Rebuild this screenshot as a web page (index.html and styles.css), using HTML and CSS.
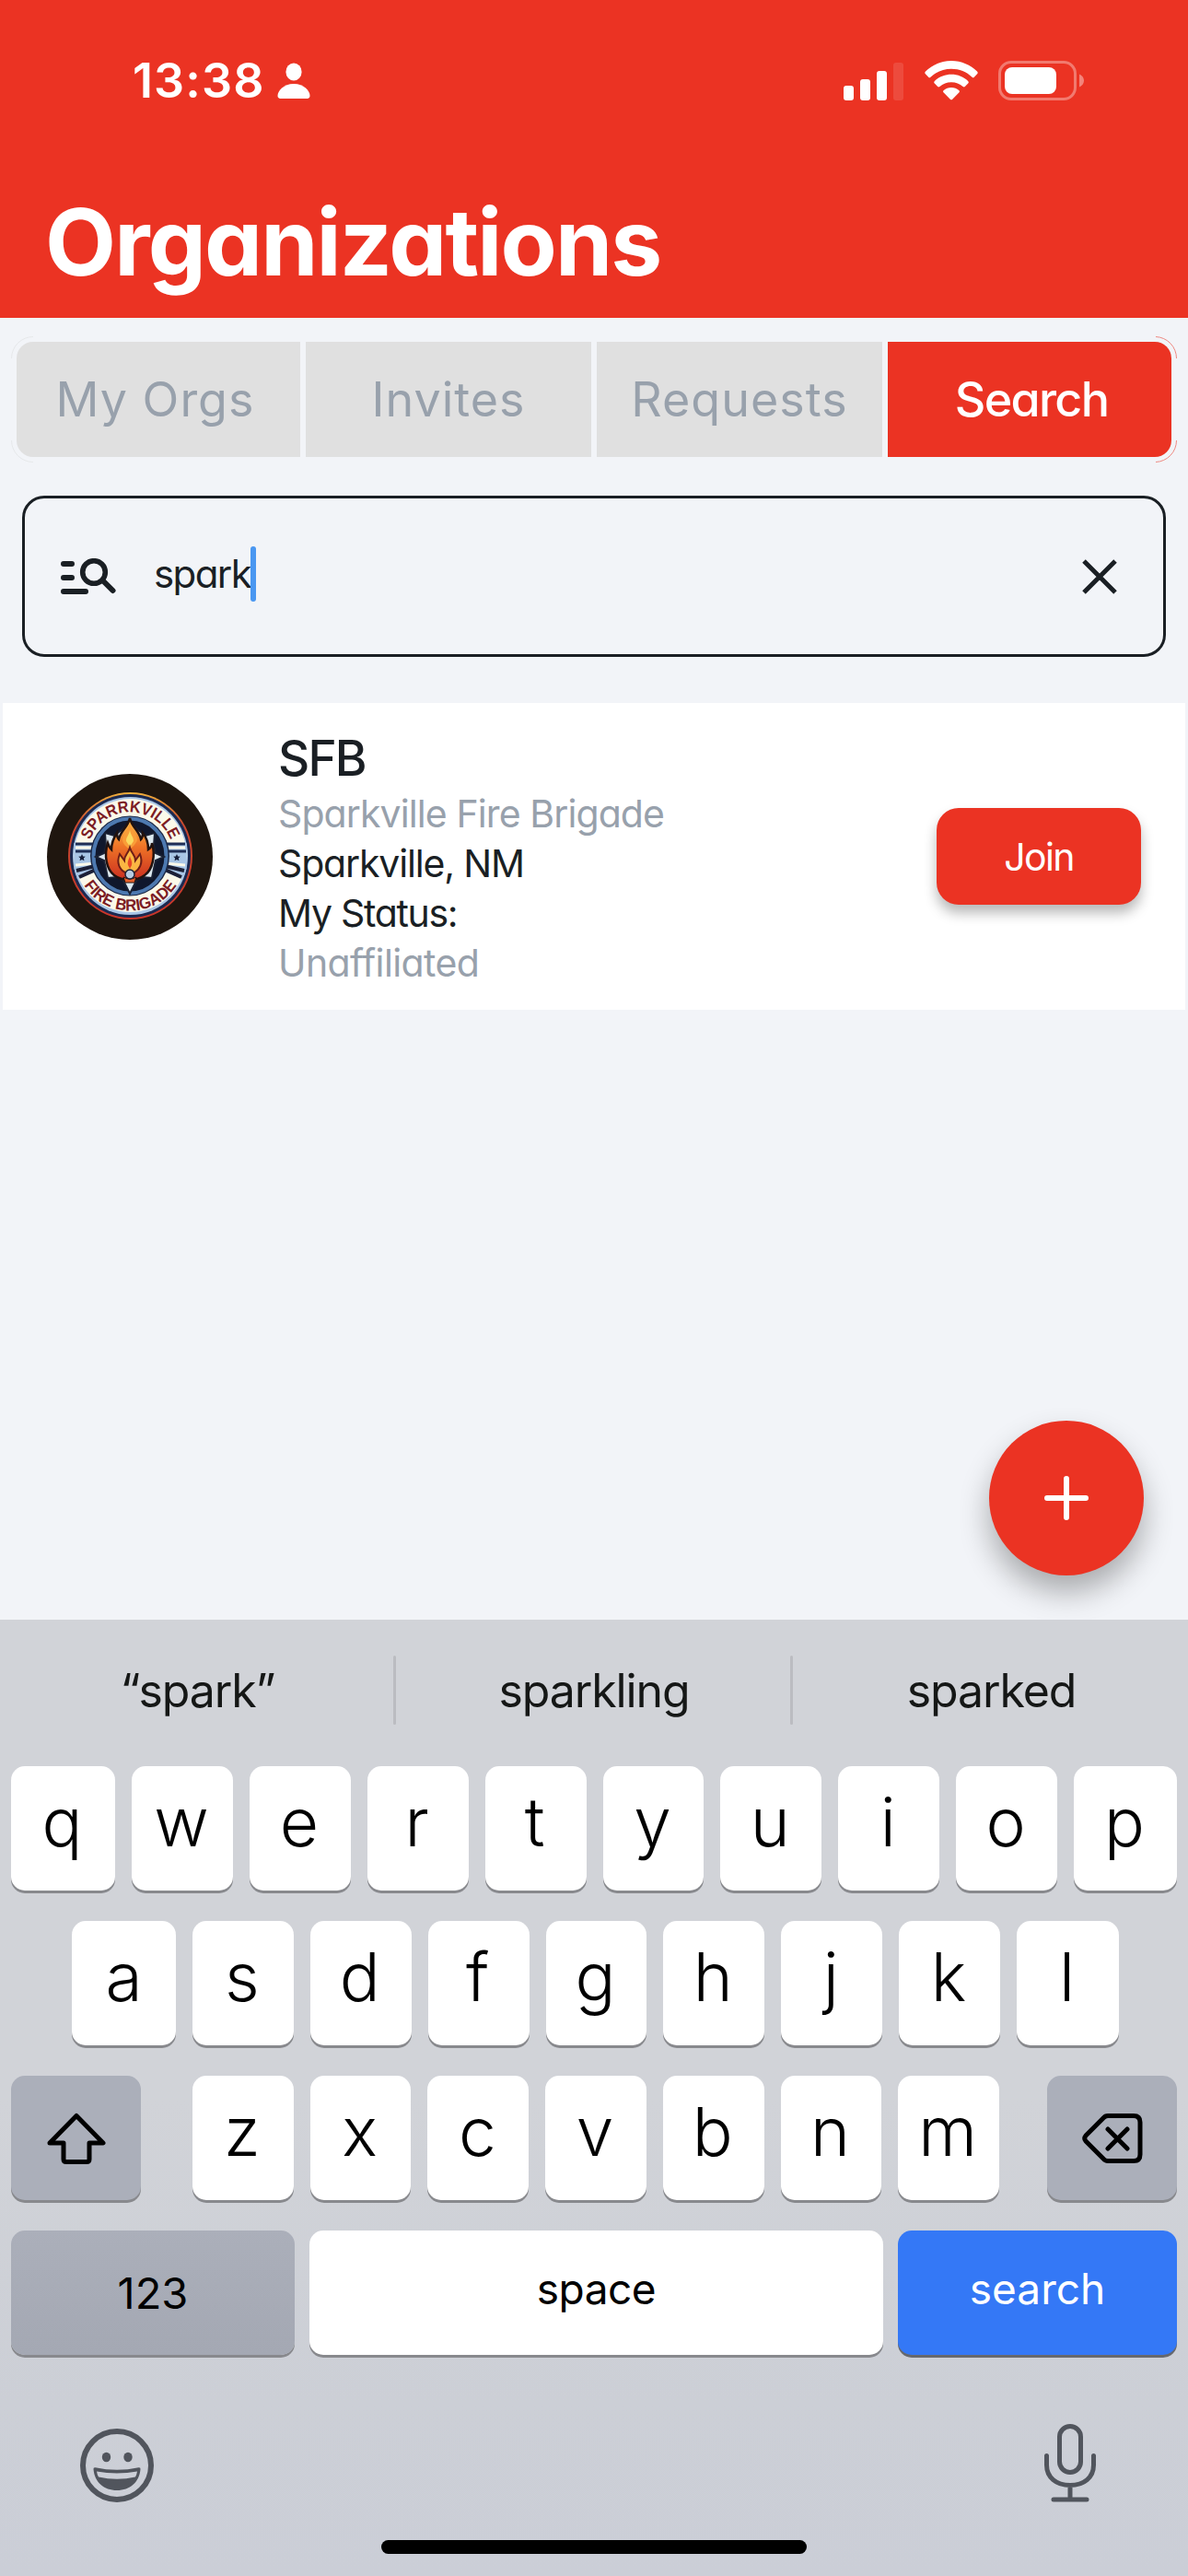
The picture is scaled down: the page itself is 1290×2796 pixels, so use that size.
FILE: index.html
```html
<!DOCTYPE html>
<html lang="en">
<head>
<meta charset="utf-8">
<title>Organizations</title>
<link rel="stylesheet" href="styles.css">
</head>
<body>
<div class="screen">
  <header class="header">
    <div class="status">
      <div class="status-left">
        <span class="time">13:38</span>
        <svg class="person" viewBox="0 0 36 40" width="36" height="40" fill="#fff"><ellipse cx="18" cy="10" rx="8.6" ry="9.4"/><path d="M3.5 39C1.500 39 .5 37.600.5 36 .5 30.500 7 23 18 23s17.500 7.500 17.500 13c0 1.600-1 3-3 3z"/></svg>
      </div>
      <div class="status-right">
        <svg class="signal" viewBox="0 0 66 42" width="66" height="42" fill="#fff"><rect x="0" y="26" width="11" height="16" rx="3"/><rect x="18" y="19" width="11" height="23" rx="3"/><rect x="36" y="10" width="11" height="32" rx="3"/><rect x="54" y="1" width="11" height="41" rx="3" opacity=".12"/></svg>
        <svg class="wifi" viewBox="0 0 58 43" width="58" height="43" fill="#fff"><path d="M29 0C40 0 50 4.500 57 11.600c.9.900.9 1.900.1 2.700l-3.300 3.400c-.7.700-1.500.700-2.200 0C45.500 12 37.700 8.800 29 8.800S12.500 12 6.400 17.700c-.7.700-1.500.700-2.200 0L.9 14.300c-.8-.8-.8-1.800.1-2.700C8 4.500 18 0 29 0z"/><path d="M29 14.700c7.100 0 13.500 2.700 18.100 7.200.9.900.9 1.800.1 2.600l-3.400 3.400c-.7.700-1.500.600-2.200 0-3.400-3-7.800-4.700-12.600-4.700s-9.200 1.700-12.600 4.700c-.7.600-1.500.700-2.200 0l-3.400-3.400c-.8-.8-.8-1.700.1-2.600 4.600-4.500 11-7.200 18.100-7.200z"/><path d="M29 29c3.200 0 6 1.100 8.200 2.900.9.800.9 1.700.1 2.500L30.200 41.700c-.8.800-1.600.8-2.400 0l-7.100-7.300c-.8-.8-.8-1.700.1-2.500C23 30.100 25.800 29 29 29z"/></svg>
        <svg class="battery" viewBox="0 0 93 43" width="93" height="43"><rect x="1.500" y="1.500" width="82" height="40" rx="12.500" fill="none" stroke="#fff" stroke-opacity=".35" stroke-width="3"/><rect x="7" y="7" width="56" height="29" rx="8" fill="#fff"/><path d="M88 14.500c3 1.200 5 3.800 5 7s-2 5.800-5 7z" fill="#fff" fill-opacity=".4"/></svg>
      </div>
    </div>
    <h1 class="title">Organizations</h1>
  </header>

  <main class="content">
    <nav class="tabs">
      <button class="tab tab-first">My Orgs</button>
      <button class="tab tab-invites">Invites</button>
      <button class="tab tab-requests">Requests</button>
      <button class="tab tab-active">Search</button>
      <svg class="tab-rings" viewBox="0 0 1266 137" width="1266" height="137" fill="none" stroke-width="1"><path d="M24 .5A23.500 23.500 0 0 0 .5 24M.5 113A23.500 23.500 0 0 0 24 136.500" stroke="#e6e8ea"/><path d="M1243 .5A23.500 23.500 0 0 1 1265.500 24M1265.500 113A23.500 23.500 0 0 1 1243 136.500" stroke="#ee8a83"/></svg>
    </nav>

    <div class="search-box">
      <svg class="search-icon" viewBox="0 0 60 42" width="60" height="42" fill="none" stroke="#1a1f24" stroke-linecap="round"><path d="M3 6h9M3 21h9M3 36h24" stroke-width="6"/><circle cx="36" cy="15" r="12.300" stroke-width="5.600"/><path d="M46 24.500 56.500 35" stroke-width="6"/></svg>
      <span class="query">spark</span><span class="caret"></span>
      <svg class="clear-icon" viewBox="0 0 38 38" width="38" height="38" fill="none" stroke="#1a1f24" stroke-width="5"><path d="M2 2 36 36M36 2 2 36"/></svg>
    </div>

    <article class="card">
      <svg class="avatar" viewBox="0 0 180 180" width="180" height="180">
        <defs>
          <path id="arc-top" d="M43.500 89A47 47.500 0 0 1 137.500 89"/>
          <path id="arc-bottom" d="M31 89A59.500 59.500 0 0 0 150 89"/>
          <linearGradient id="ring" x1="0" y1="0" x2="0" y2="1"><stop offset="0" stop-color="#f0b03c"/><stop offset=".25" stop-color="#c8482f"/><stop offset="1" stop-color="#c9352a"/></linearGradient>
          <linearGradient id="fire" x1="0" y1="0" x2="0" y2="1"><stop offset="0" stop-color="#fbc550"/><stop offset=".45" stop-color="#ef7527"/><stop offset="1" stop-color="#cb2f20"/></linearGradient>
        </defs>
        <circle cx="90" cy="90" r="90" fill="#1f160f"/>
        <ellipse cx="90.500" cy="89" rx="67.500" ry="69" fill="url(#ring)"/>
        <ellipse cx="90.500" cy="89" rx="65.500" ry="67" fill="#1b2950"/>
        <ellipse cx="90.500" cy="89" rx="62.500" ry="64" fill="#a9c6e6"/>
        <ellipse cx="90.500" cy="88.500" rx="61" ry="61.500" fill="#fbf9ea"/>
        <path d="M29.500 75h122v28l-4 11L90 92l-57 22-3.500-11z" fill="#a9c6e6"/>
        <path d="M31 76h22M31 84h20M128 76h22M130 84h21" stroke="#1f2e55" stroke-width="3"/>
        <path d="M31 80h21M129 80h21M31 99l22-2M128 97l22 2" stroke="#fbf9ea" stroke-width="3"/>
        <path d="M32 105l20-5M35 112l20-9M128 100l21 5M126 103l20 9" stroke="#1c2037" stroke-width="4"/>
        <path d="M38 87l1.200 2.400 2.600.3-1.900 1.900.5 2.600-2.400-1.300-2.400 1.300.5-2.600-1.900-1.900 2.600-.3zM141 87l1.200 2.400 2.600.3-1.900 1.900.5 2.600-2.400-1.300-2.400 1.300.5-2.600-1.900-1.900 2.600-.3z" fill="#17203c"/>
        <ellipse cx="90" cy="89" rx="43" ry="43.500" fill="#1b2744"/>
        <ellipse cx="90" cy="89" rx="39.500" ry="40.500" fill="#10172c" stroke="#4d79b0" stroke-width="4"/>
        <path d="M53 90l9-4 2-8-1-14 10 3 8-6 9-8 9 8 8 6 10-3-1 14 2 8 9 4-9 4-2 9-2 10-10-1-7 4-7 14-7-14-7-4-10 1-2-10-2-9z" fill="#dce8ef" stroke="#1a2134" stroke-width="2"/>
        <path d="M90 48c2 10 10 13 12 23 2-2 2-4 2-7 5 6 6 12 6 18 3-2 4-5 4-7 4 13 1 29-8 35-5 4-10 5-16 5s-12-1-17-5c-9-7-11-22-7-35 1 3 2 5 4 7 0-7 2-12 6-18 0 3 0 5 2 7 2-10 10-13 12-23z" fill="url(#fire)" stroke="#21120f" stroke-width="2.500"/>
        <path d="M90 53c2 9 8 11 8 19-2 5-5 7-8 10-4-3-7-5-8-10 0-8 6-10 8-19z" fill="#f99d38"/>
        <path d="M90 61c1 6 4 7 4 12l-4 6-4-6c0-5 3-6 4-12z" fill="#fbd95f"/>
        <path d="M90 80c2 7 6 8 6 14l5-7c4 10-1 17-6 20H85c-6-3-10-10-6-20l5 7c0-6 4-7 6-14z" fill="#fbb743" stroke="#6e1d17" stroke-width="2"/>
        <path d="M90 89c1 4 3 6 2 10l-2 4-2-4c-1-4 1-6 2-10z" fill="#e84727"/>
        <path d="M83 112q7 4 14 0l-2 6H85z" fill="#e5602c" stroke="#21120f"/>
        <circle cx="90" cy="109" r="5" fill="#b8cce0" stroke="#1d2235" stroke-width="1.500"/>
        <text class="badge-text" textLength="113" lengthAdjust="spacingAndGlyphs"><textPath href="#arc-top" startOffset="50%" text-anchor="middle" textLength="113" lengthAdjust="spacingAndGlyphs">SPARRKVILLE</textPath></text>
        <text class="badge-text" textLength="120" lengthAdjust="spacingAndGlyphs"><textPath href="#arc-bottom" startOffset="50%" text-anchor="middle" textLength="120" lengthAdjust="spacingAndGlyphs">FIRE BRIGADE</textPath></text>
      </svg>
      <div class="org">
        <h2 class="org-code">SFB</h2>
        <span class="line muted l-name">Sparkville Fire Brigade</span>
        <span class="line l-city">Sparkville, NM</span>
        <span class="line l-status">My Status:</span>
        <span class="line muted l-aff">Unaffiliated</span>
      </div>
      <button class="join">Join</button>
    </article>

    <button class="fab" aria-label="Add"><svg viewBox="0 0 48 48" width="48" height="48" stroke="#fff" stroke-width="6" stroke-linecap="round"><path d="M3 24h42M24 3v42"/></svg></button>
  </main>

  <section class="keyboard">
    <div class="suggestions">
      <span>“spark”</span><i></i><span>sparkling</span><i></i><span>sparked</span>
    </div>
    <div class="row row-1"><b>q</b><b>w</b><b>e</b><b>r</b><b>t</b><b>y</b><b>u</b><b>i</b><b>o</b><b>p</b></div>
    <div class="row row-2"><b>a</b><b>s</b><b>d</b><b>f</b><b>g</b><b>h</b><b>j</b><b>k</b><b>l</b></div>
    <div class="row row-3">
      <b class="fn"><svg viewBox="0 0 64 56" width="64" height="56" fill="none" stroke="#000" stroke-width="5" stroke-linejoin="round"><path d="M32 3.500 61 33H46v17.500q0 3-3 3H21q-3 0-3-3V33H3z"/></svg></b>
      <div class="letters"><b>z</b><b>x</b><b>c</b><b>v</b><b>b</b><b>n</b><b>m</b></div>
      <b class="fn"><svg viewBox="0 0 66 54" width="66" height="54" fill="none" stroke="#000" stroke-width="5" stroke-linecap="round" stroke-linejoin="round"><path d="M28 2.500H56q7 0 7 7v35q0 7-7 7H28q-3 0-5-2.500L4 30q-2.500-3 0-6L23 5q2-2.500 5-2.500zM28 17 49 38M49 17 28 38"/></svg></b>
    </div>
    <div class="row row-4"><b class="fn num">123</b><b class="space">space</b><b class="go">search</b></div>
    <div class="bottom">
      <svg class="emoji" viewBox="0 0 80 80" width="80" height="80"><circle cx="40" cy="40" r="37" fill="none" stroke="#51555d" stroke-width="6"/><ellipse cx="28.500" cy="31" rx="4.700" ry="5.200" fill="#51555d"/><ellipse cx="52" cy="31" rx="4.700" ry="5.200" fill="#51555d"/><path d="M14.500 44q-.3-2 2-1.700 23.500 5 47 0 2.300-.3 2 1.700C64.500 58 54 67 40 67S15.500 58 14.500 44z" fill="#51555d"/><path d="M18 46.500q22 4 44 0-.4 3-2 6-20 4.500-40 0-1.600-3-2-6z" fill="#cccfd7"/></svg>
      <svg viewBox="0 0 56 85" width="56" height="85" fill="none" stroke="#51555d" stroke-width="5" stroke-linecap="round"><rect x="16.500" y="2.500" width="23" height="50" rx="11.500"/><path d="M2.500 34.500v10C2.500 58 13 66.500 28 66.500S53.500 58 53.500 44.500v-10M28 67v15M10 82h36"/></svg>
    </div>
    <div class="home"></div>
  </section>
</div>
</body>
</html>
```
FILE: styles.css
```css
* { box-sizing: border-box; }
body { margin: 0; font-family: Inter, "Liberation Sans", sans-serif; }
button { border: 0; padding: 0; font: inherit; }
svg { display: block; flex: none; }
h1, h2 { margin: 0; }

.screen { width: 1290px; height: 2796px; display: flex; flex-direction: column; background: #f2f4f8; overflow: hidden; }

/* header */
.header { height: 345px; background: #eb3323; color: #fff; }
.status { height: 175px; padding: 0 113px 0 144px; display: flex; justify-content: space-between; align-items: center; }
.status-left, .status-right { display: flex; align-items: center; }
.time { font-size: 52px; font-weight: 560; line-height: 60px; letter-spacing: 1.1px; }
.person { margin-left: 13px; }
.wifi { margin-left: 22px; }
.battery { margin-left: 22px; }
.title { padding-left: 49px; font-size: 100px; font-weight: 700; line-height: 176px; letter-spacing: -1.85px; font-feature-settings: "cv11"; }

/* tabs */
.content { flex: 1; position: relative; display: flex; flex-direction: column; }
.tabs { position: relative; height: 125px; margin: 26px 18px 0; display: grid; grid-template-columns: 308px 310px 310px 308px; gap: 6px; }
.tab { background: #e0e0e0; color: #98a1ac; font-size: 52px; line-height: 125px; letter-spacing: 1px; }
.tab-first { border-radius: 18px 0 0 18px; padding-right: 7px; }
.tab-active { background: #eb3323; color: #fff; font-weight: 500; letter-spacing: -1.7px; padding-left: 4px; border-radius: 0 18px 18px 0; font-feature-settings: "cv11"; }
.tab-rings { position: absolute; left: -6px; top: -6px; }

/* search field */
.search-box { height: 175px; margin: 42px 24px 0; border: 3px solid #1a1f24; border-radius: 24px; padding: 0 50px 0 39px; display: flex; align-items: center; }
.search-icon { margin-top: 2px; }
.query { margin-left: 41px; font-size: 42px; line-height: 60px; letter-spacing: -1.6px; color: #1a1f24; font-feature-settings: "cv11"; padding-bottom: 6px; }
.caret { width: 6px; height: 60px; margin-bottom: 6px; border-radius: 3px; background: #4a97f1; }
.clear-icon { margin-left: auto; }

/* result card */
.card { height: 333px; margin: 50px 3px 0; padding: 0 48px; background: #fff; display: flex; align-items: center; color: #1a1f24; font-feature-settings: "cv11"; }
.badge-text { font: 700 17.5px "Liberation Sans", sans-serif; fill: #7b1c24; }
.org { margin-left: 71px; padding-top: 2px; flex: 1; display: flex; flex-direction: column; }
.org-code { font-size: 53px; font-weight: 500; line-height: 66px; letter-spacing: -1.8px; }
.line { font-size: 41px; line-height: 54px; white-space: nowrap; }
.l-name { letter-spacing: -0.9px; }
.l-city { letter-spacing: -1.15px; }
.l-status { letter-spacing: -1.3px; }
.l-aff { letter-spacing: -0.6px; }
.muted { color: #98a1ac; }
.join { width: 222px; height: 105px; border-radius: 24px; background: #eb3323; color: #fff; font-size: 41px; letter-spacing: -1.7px; box-shadow: 0 9px 14px rgba(0,0,0,.28); font-feature-settings: "cv11"; }

.fab { position: absolute; right: 48px; bottom: 48px; width: 168px; height: 168px; border-radius: 50%; background: #eb3323; display: grid; place-items: center; box-shadow: 0 18px 32px rgba(0,0,0,.3); }

/* keyboard */
.keyboard { position: relative; height: 1038px; background: linear-gradient(#d1d3d8 50%, #cccfd6 82%, #cbced7); }
.suggestions { height: 153px; margin-bottom: 6px; display: grid; grid-template-columns: 427px 3px 428px 3px 429px; align-items: center; text-align: center; font-size: 50px; color: #151716; }
.suggestions span { padding-left: 2px; letter-spacing: -1.1px; }
.suggestions i { height: 75px; background: #bbbcc1; border-radius: 2px; }
.row { height: 135px; margin-bottom: 33px; padding: 0 12px; display: flex; gap: 18px; }
.row b { flex: 1; display: flex; align-items: center; justify-content: center; background: #fff; border-radius: 15px; box-shadow: 0 3px 0 #88898d; font-size: 73px; font-weight: 340; line-height: 121px; padding: 0 2px 14px 0; color: #000; }
.row-1 b:first-child { flex: 0 0 113px; }
.row-1 b:last-child { flex: 0 0 112px; }
.row-2 { padding: 0 75px 0 78px; }
.row-2 b:first-child { flex: 0 0 113px; padding-right: 0; }
.row-2 b:last-child { flex: 0 0 111px; }
.row-3 { justify-content: space-between; gap: 0; }
.row-3 .letters { width: 876px; margin-left: 4px; display: flex; gap: 18px; }
.row-3 .fn { flex: 0 0 141px; padding: 0; }
.row .fn { background: #abafba; }
.row-4 { gap: 16px; }
.row-4 .num { flex: 0 0 308px; background: linear-gradient(#abafba, #a4a8b3); font-size: 47px; padding: 0; font-weight: 400; }
.row-4 .space, .row-4 .go { font-size: 46px; font-weight: 400; padding: 0 0 9px; }
.row-4 .space { letter-spacing: -0.5px; }
.row-4 .go { flex: 0 0 303px; background: #3478f6; color: #fff; box-shadow: 0 3px 0 #66686d; }
.bottom { display: flex; justify-content: space-between; align-items: flex-start; padding: 42px 100px 0 87px; }
.emoji { margin-top: 5px; }
.home { position: absolute; left: 414px; bottom: 24px; width: 462px; height: 15px; border-radius: 8px; background: #000; }
```
